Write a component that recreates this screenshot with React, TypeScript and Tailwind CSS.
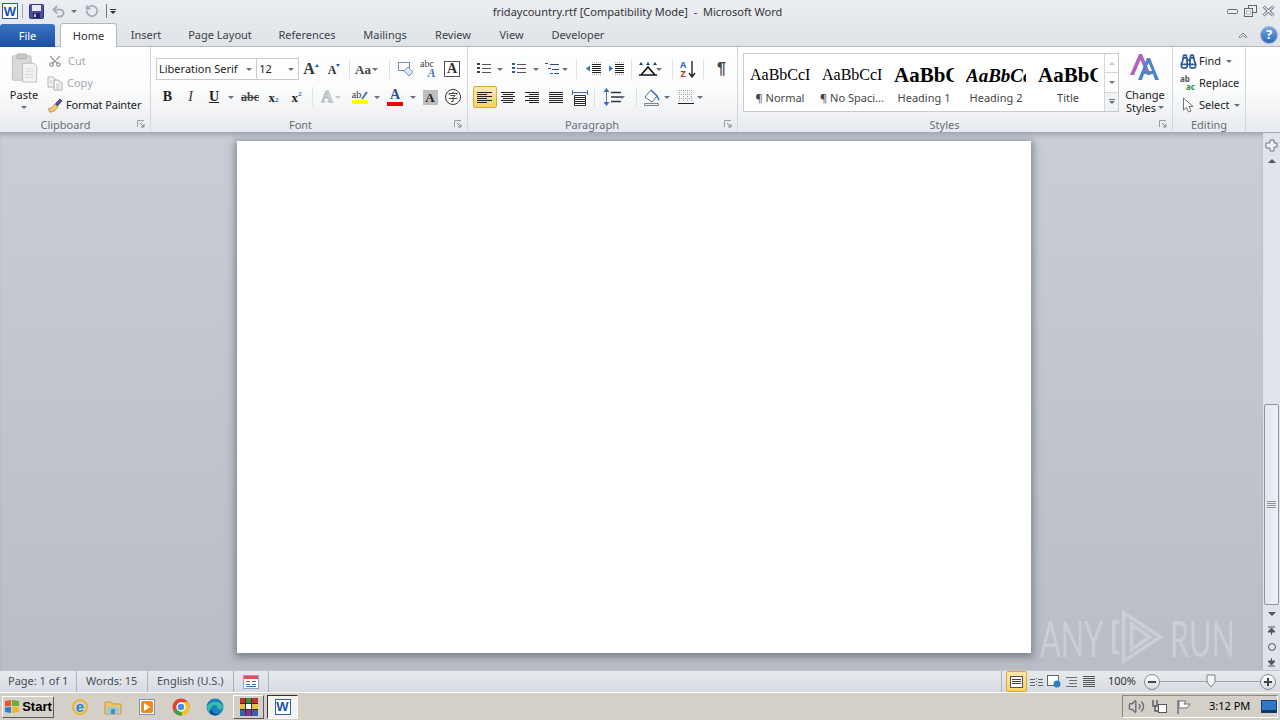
import type { ReactNode } from 'react'
import { Binoculars, Redo2, RotateCcw, Scissors, Undo2, Volume2 } from 'lucide-react'

const ui = "font-['Noto_Sans',sans-serif]"
const serif = "font-['Liberation_Serif',serif]"

const Caret = ({ className = '' }: { className?: string }) => (
  <span className={`inline-block w-0 h-0 border-x-[3px] border-t-[3px] border-x-transparent border-t-[#6a6f77] ${className}`} />
)

const Tool = ({ w, children, className = '' }: { w: string; children?: ReactNode; className?: string }) => (
  <div className={`${w} h-[22px] shrink-0 flex items-center justify-center ${className}`}>{children}</div>
)

const Sep = ({ className = '' }: { className?: string }) => (
  <div className={`w-px h-[20px] shrink-0 bg-[#dfe2e6] ${className}`} />
)

// little icon made only of horizontal lines
const Lines = ({ rows, color = '#222', w = 16, h = 16 }: { rows: number[][]; color?: string; w?: number; h?: number }) => (
  <svg width={w} height={h} viewBox={`0 0 ${w} ${h}`}>
    {rows.map(([a, b, y], i) => (
      <rect key={i} x={a} y={y} width={b - a} height={1} fill={color} />
    ))}
  </svg>
)

const Launcher = () => (
  <svg width="8" height="8" viewBox="0 0 8 8" className="shrink-0">
    <path d="M0.5 7V0.5H7" fill="none" stroke="#9aa0a8" />
    <path d="M3 3L7 7M7 4V7H4" fill="none" stroke="#7d8793" />
  </svg>
)

const Group = ({ w, label, children, launcher = true, pad = 'pr-[5px]', labelPad = 'pr-[8px]' }: { w: string; label: string; children: ReactNode; launcher?: boolean; pad?: string; labelPad?: string }) => (
  <div className={`${w} h-[85px] shrink-0 flex flex-col border-r border-[#d3d6da]`}>
    <div className="h-[70px]">{children}</div>
    <div className={`h-[14px] flex items-center ${pad}`}>
      <span className={`flex-1 text-center text-[11px] leading-none text-[#6a6f77] ${labelPad}`}>{label}</span>
      {launcher && <Launcher />}
    </div>
  </div>
)

const WordIcon = () => (
  <div className="w-[16px] h-[16px] border border-[#2d5ea8] bg-white flex items-center justify-center text-[#1c54a8] font-bold text-[13px] leading-none font-['Liberation_Sans',sans-serif]">
    W
  </div>
)

const SaveIcon = () => (
  <svg width="15" height="15" viewBox="0 0 15 15">
    <rect x="0.5" y="0.5" width="14" height="14" rx="1" fill="#4a4fa8" stroke="#33367e" />
    <rect x="3" y="1" width="9" height="6" fill="#e6e9f4" />
    <rect x="4" y="9" width="7" height="5" fill="#22245c" />
    <rect x="5" y="10" width="2" height="3" fill="#b8bbd8" />
  </svg>
)

const WinControls = () => (
  <div className="flex items-center gap-[5px] pr-[5px]">
    <svg width="12" height="10" viewBox="0 0 12 10">
      <rect x="0.5" y="3.5" width="10" height="4" rx="1" fill="#eef1f4" stroke="#5f6670" />
    </svg>
    <svg width="13" height="12" viewBox="0 0 13 12">
      <rect x="4.5" y="0.5" width="8" height="7" fill="#eef1f4" stroke="#5f6670" />
      <rect x="0.5" y="3.5" width="8" height="8" fill="#eef1f4" stroke="#5f6670" />
      <rect x="2.5" y="6" width="4" height="3" fill="#fff" stroke="#8b929b" strokeWidth="0.6" />
    </svg>
    <svg width="13" height="12" viewBox="0 0 13 12">
      <path d="M1.5 1.5L11.5 10.5M11.5 1.5L1.5 10.5" stroke="#5f6670" strokeWidth="3" />
      <path d="M1.5 1.5L11.5 10.5M11.5 1.5L1.5 10.5" stroke="#eef1f4" strokeWidth="1.2" />
    </svg>
  </div>
)

const TitleBar = () => (
  <div className="h-[22px] flex items-center pl-[2px]">
    <WordIcon />
    <div className="w-px h-[14px] bg-[#9ea4ac] ml-[4px] mr-[6px]" />
    <SaveIcon />
    <Undo2 size={15} strokeWidth={3} color="#a3acb9" className="ml-[7px]" />
    <Caret className="ml-[5px]" />
    <RotateCcw size={14} strokeWidth={3} color="#a3acb9" className="ml-[8px]" />
    <div className="w-px h-[14px] bg-[#777] ml-[7px] mr-[3px]" />
    <div className="flex flex-col items-center gap-px">
      <div className="w-[6px] h-px bg-[#333]" />
      <Caret className="!border-t-[#333]" />
    </div>
    <div className="flex-1 text-center text-[11px] leading-none text-[#333] pr-[68px]">
      fridaycountry.rtf [Compatibility Mode]&nbsp; - &nbsp;Microsoft Word
    </div>
    <WinControls />
  </div>
)

const tabs: [string, string][] = [
  ['Insert', 'w-[58px]'],
  ['Page Layout', 'w-[90px]'],
  ['References', 'w-[84px]'],
  ['Mailings', 'w-[72px]'],
  ['Review', 'w-[64px]'],
  ['View', 'w-[53px]'],
  ['Developer', 'w-[80px]'],
]

const TabRow = () => (
  <div className="h-[25px] flex items-end text-[11px] border-b border-[#b4b8bd]">
    <div className="w-[55px] h-[23px] pt-px rounded-t-[3px] bg-gradient-to-b from-[#3b74c2] to-[#1c4e9e] text-white flex items-center justify-center -mb-px">File</div>
    <div className="w-[57px] h-[24px] pt-px ml-[5px] rounded-t-[3px] bg-white border border-b-0 border-[#b4b8bd] text-[#333] flex items-center justify-center -mb-px">Home</div>
    {tabs.map(([t, w]) => (
      <div key={t} className={`${w} h-[23px] pt-[2px] flex items-center justify-center text-[#3d4248]`}>{t}</div>
    ))}
    <div className="flex-1 h-[23px] flex items-center justify-end pr-[2px] gap-[12px]">
      <svg width="10" height="8" viewBox="0 0 10 8">
        <path d="M1 6L5 2L9 6L7.5 6.5L5 4.5L2.5 6.5Z" fill="#fff" stroke="#5f6670" strokeWidth="0.8" />
      </svg>
      <div className="w-[18px] h-[18px] rounded-full bg-gradient-to-b from-[#7aa9e0] to-[#2a66b8] border border-[#9ab8dc] text-white text-[13px] font-bold leading-none flex items-center justify-center">?</div>
    </div>
  </div>
)

const PasteIcon = () => (
  <svg width="27" height="30" viewBox="0 0 28 32">
    <rect x="1" y="3" width="20" height="26" rx="1" fill="#d9d9d9" stroke="#bdbdbd" />
    <rect x="6" y="1" width="10" height="5" rx="1" fill="#c9c9c9" stroke="#aeaeae" />
    <path d="M12 11H24L27 14V31H12Z" fill="#f3f3f3" stroke="#bdbdbd" />
    <path d="M15 17H24M15 20H24M15 23H24M15 26H24" stroke="#d4d4d4" />
  </svg>
)

const CopyIcon = () => (
  <svg width="16" height="15" viewBox="0 0 16 15">
    <path d="M1 1H6L9 4V11H1Z" fill="#f2f2f2" stroke="#b5b5b5" />
    <path d="M7 4H11L15 7V14H7Z" fill="#f8f8f8" stroke="#a8a8a8" />
    <path d="M9 8H13M9 10H13M9 12H13M3 5H5M3 7H5" stroke="#c2c2c2" />
  </svg>
)

const BrushIcon = () => (
  <svg width="16" height="15" viewBox="0 0 16 15">
    <path d="M1 11C4 11 6 8 8 6L11 9C9 12 6 14.5 2 14C3 13 2 12 1 11Z" fill="#efc872" stroke="#a07c30" strokeWidth="0.7" />
    <path d="M8.5 5.5L13 1L15 3L10.5 8Z" fill="#5a4f9c" stroke="#3c3372" strokeWidth="0.7" />
  </svg>
)

const Clipboard = () => (
  <Group w="w-[151px]" label="Clipboard" pad="pl-[2px] pr-[5px]">
    <div className="flex pl-[6px] h-full">
      <div className="w-[36px] flex flex-col items-center pt-[6px]">
        <PasteIcon />
        <span className="text-[11px] leading-none text-[#222] mt-[6px]">Paste</span>
        <Caret className="mt-[6px]" />
      </div>
      <div className="flex flex-col ml-[5px] pt-[3px] text-[11px] text-[#a4a8ad]">
        <div className="h-[22px] flex items-center gap-[4px]">
          <Scissors size={14} color="#8a8f96" className="ml-[1px] -rotate-90" />
          <span className="ml-[2px]">Cut</span>
        </div>
        <div className="h-[22px] flex items-center gap-[4px]">
          <CopyIcon />
          <span>Copy</span>
        </div>
        <div className="h-[22px] flex items-center gap-[3px] text-[#222] whitespace-nowrap">
          <BrushIcon />
          <span className="tracking-[-0.15px]">Format Painter</span>
        </div>
      </div>
    </div>
  </Group>
)

const Serif = ({ children, className = '' }: { children: ReactNode; className?: string }) => (
  <span className={`${serif} leading-none ${className}`}>{children}</span>
)

const Combo = ({ w, text }: { w: string; text: string }) => (
  <div className={`${w} h-[22px] border border-[#c7cbd1] bg-white flex items-center pl-[2px] pr-[4px] text-[11px] text-[#222] -mr-px`}>
    <span className="flex-1 truncate">{text}</span>
    <Caret />
  </div>
)

const Font = () => (
  <Group w="w-[317px]" label="Font" labelPad="pr-[4px]">
    <div className="pl-[5px] pt-[11px] flex flex-col gap-[6px]">
      <div className="flex items-center">
        <Combo w="w-[102px]" text="Liberation Serif" />
        <Combo w="w-[43px]" text="12" />
        <Tool w="w-[24px]" className="ml-[1px]">
          <Serif className="text-[16px] font-bold text-[#333]">A</Serif>
          <Caret className="-mt-[8px] rotate-180 !border-t-[#2a5ea8] !border-x-[2px]" />
        </Tool>
        <Tool w="w-[22px]">
          <Serif className="text-[12px] font-bold text-[#333] mt-[2px]">A</Serif>
          <Caret className="-mt-[8px] !border-t-[#2a5ea8] !border-x-[2px]" />
        </Tool>
        <Sep className="ml-[4px]" />
        <Tool w="w-[33px]" className="gap-[1px]">
          <Serif className="text-[13px] font-bold text-[#444]">Aa</Serif>
          <Caret />
        </Tool>
        <Sep className="ml-[6px]" />
        <Tool w="w-[31px]">
          <svg width="17" height="16" viewBox="0 0 17 16">
            <rect x="1.5" y="1.5" width="11" height="8" fill="#fff" stroke="#7a8ea8" />
            <path d="M7 10L11 6L16 11L12 15Z" fill="#dce6f4" stroke="#7796bd" />
          </svg>
        </Tool>
        <Tool w="w-[16px]" className="flex-col">
          <Serif className="text-[10px] text-[#444] -mb-[2px] -ml-[4px]">abc</Serif>
          <Serif className="text-[12px] italic font-bold text-[#3b78c2] ml-[5px]">A</Serif>
        </Tool>
        <Tool w="w-[30px]">
          <div className="w-[16px] h-[16px] border border-[#555] bg-white flex items-center justify-center">
            <Serif className="text-[14px] font-bold text-[#333]">A</Serif>
          </div>
        </Tool>
      </div>
      <div className="flex items-center">
        <Tool w="w-[23px]"><Serif className="text-[14px] font-bold text-[#222]">B</Serif></Tool>
        <Tool w="w-[23px]"><Serif className="text-[14px] italic text-[#333]">I</Serif></Tool>
        <Tool w="w-[24px]"><Serif className="text-[14px] font-bold underline text-[#222]">U</Serif></Tool>
        <Tool w="w-[10px]"><Caret /></Tool>
        <Tool w="w-[24px]" className="ml-[2px]"><Serif className="text-[12px] font-bold line-through text-[#444]">abc</Serif></Tool>
        <Tool w="w-[23px]">
          <Serif className="text-[13px] font-bold text-[#222]">x</Serif>
          <Serif className="text-[7px] font-bold text-[#2a5ea8] mt-[6px]">2</Serif>
        </Tool>
        <Tool w="w-[23px]">
          <Serif className="text-[13px] font-bold text-[#222]">x</Serif>
          <Serif className="text-[7px] font-bold text-[#2a5ea8] -mt-[6px]">2</Serif>
        </Tool>
        <Sep className="ml-[4px]" />
        <Tool w="w-[28px]" className="ml-[4px] gap-[2px]">
          <Serif className="text-[16px] font-bold text-[#d9dbde] [-webkit-text-stroke:1px_#b7babf]">A</Serif>
          <Caret className="!border-t-[#c3c6ca]" />
        </Tool>
        <Tool w="w-[24px]" className="flex-col ml-[3px]">
          <div className="flex items-center">
            <Serif className="text-[10px] text-[#333]">ab</Serif>
            <svg width="7" height="9" viewBox="0 0 7 9">
              <path d="M1 8L6 1" stroke="#4a76b0" strokeWidth="2" />
            </svg>
          </div>
          <div className="w-[16px] h-[4px] bg-[#ffff00]" />
        </Tool>
        <Tool w="w-[10px]"><Caret /></Tool>
        <Tool w="w-[26px]" className="flex-col">
          <Serif className="text-[14px] font-bold text-[#2a4f96]">A</Serif>
          <div className="w-[16px] h-[4px] bg-[#f00000]" />
        </Tool>
        <Tool w="w-[10px]"><Caret /></Tool>
        <Tool w="w-[24px]">
          <div className="w-[15px] h-[15px] bg-[#bdbdbd] flex items-center justify-center">
            <Serif className="text-[13px] font-bold text-[#222]">A</Serif>
          </div>
        </Tool>
        <Tool w="w-[22px]">
          <div className="w-[16px] h-[16px] rounded-full border border-[#333] bg-white flex items-center justify-center text-[10px] leading-none text-[#222] font-['Noto_Sans_CJK_SC',sans-serif]">字</div>
        </Tool>
      </div>
    </div>
  </Group>
)

const bullets = [[6, 15, 3], [6, 15, 7], [6, 15, 11]]

const BulletIcon = ({ dot }: { dot: string }) => (
  <div className="relative">
    <Lines rows={bullets} color="#555" />
    <div className="absolute left-[1px] top-[2px] flex flex-col gap-[2px]">
      <div className={`w-[3px] h-[2px] ${dot}`} />
      <div className={`w-[3px] h-[2px] ${dot}`} />
      <div className={`w-[3px] h-[2px] ${dot}`} />
    </div>
  </div>
)

const Align = ({ rows }: { rows: number[][] }) => <Lines rows={rows} color="#222" />

const IndentIcon = ({ arrow }: { arrow: string }) => (
  <svg width="17" height="16" viewBox="0 0 17 16">
    <path d="M7 3.5H16M7 5.5H16M7 7.5H16M7 9.5H16M7 11.5H16" stroke="#222" />
    <path d={arrow} fill="#2e6fc0" />
    <path d="M7 13.5H16M7 1.5H16" stroke="#aaa" strokeDasharray="1 1" />
  </svg>
)

const Paragraph = () => (
  <Group w="w-[270px]" label="Paragraph">
    <div className="pt-[11px] pl-[5px] flex flex-col gap-[6px]">
      <div className="flex items-center">
        <Tool w="w-[22px]"><BulletIcon dot="bg-[#3a3f46]" /></Tool>
        <Tool w="w-[10px]"><Caret /></Tool>
        <Tool w="w-[24px]" className="ml-[2px]"><BulletIcon dot="bg-[#2a5ea8]" /></Tool>
        <Tool w="w-[9px]"><Caret /></Tool>
        <Tool w="w-[22px]" className="ml-[1px]">
          <Lines rows={[[1, 4, 2], [6, 15, 3], [4, 7, 7], [8, 15, 8], [6, 9, 12], [10, 15, 12]]} color="#2f4f7f" />
        </Tool>
        <Tool w="w-[9px]" className="-ml-[3px]"><Caret /></Tool>
        <Sep className="ml-[7px]" />
        <Tool w="w-[24px]" className="ml-[4px]"><IndentIcon arrow="M1 7.5L5 4.5V10.5Z" /></Tool>
        <Tool w="w-[23px]"><IndentIcon arrow="M5 7.5L1 4.5V10.5Z" /></Tool>
        <Sep className="ml-[3px]" />
        <Tool w="w-[24px]" className="ml-[4px]">
          <svg width="18" height="16" viewBox="0 0 18 16">
            <path d="M2 14L9 6L16 14M0 14H18" fill="none" stroke="#111" strokeWidth="1.6" />
            <path d="M2 1L4 4H0ZM16 1L18 4H14ZM9 1L11 4H7Z" fill="#1a3f7a" />
          </svg>
        </Tool>
        <Tool w="w-[8px]" className="-ml-[5px]"><Caret /></Tool>
        <Sep className="ml-[9px]" />
        <Tool w="w-[30px]">
          <div className="flex flex-col items-center">
            <span className="text-[9px] leading-[9px] font-bold text-[#3a6db4]">A</span>
            <span className="text-[9px] leading-[9px] font-bold text-[#a23a2c]">Z</span>
          </div>
          <svg width="8" height="18" viewBox="0 0 8 18" className="ml-[2px]">
            <path d="M4 1V16M1 13L4 17L7 13" fill="none" stroke="#222" strokeWidth="1.4" />
          </svg>
        </Tool>
        <Sep />
        <Tool w="w-[35px]"><span className="text-[16px] leading-none font-bold text-[#444] font-['Liberation_Sans',sans-serif]">¶</span></Tool>
      </div>
      <div className="flex items-center">
        <Tool w="w-[24px]" className="border border-[#d9a93f] rounded-[2px] bg-gradient-to-b from-[#fde9a8] to-[#fbd168]">
          <Align rows={[[0, 15, 3], [0, 10, 5], [0, 15, 7], [0, 10, 9], [0, 15, 11], [0, 10, 13]]} />
        </Tool>
        <Tool w="w-[24px]"><Align rows={[[0, 14, 3], [2, 12, 5], [0, 14, 7], [2, 12, 9], [0, 14, 11], [2, 12, 13]]} /></Tool>
        <Tool w="w-[24px]"><Align rows={[[0, 14, 3], [4, 14, 5], [0, 14, 7], [4, 14, 9], [0, 14, 11], [4, 14, 13]]} /></Tool>
        <Tool w="w-[24px]"><Align rows={[[0, 14, 3], [0, 14, 5], [0, 14, 7], [0, 14, 9], [0, 14, 11], [0, 14, 13]]} /></Tool>
        <Tool w="w-[22px]">
          <svg width="16" height="17" viewBox="0 0 16 17">
            <path d="M1 3.5H15M0.5 1V6M15.5 1V6" stroke="#3a6db4" />
            <path d="M2.5 6.5H13.5V16.5H2.5Z" fill="#fff" stroke="#333" />
            <path d="M3 8.5H13M3 10.5H13M3 12.5H13M3 14.5H13" stroke="#222" />
          </svg>
        </Tool>
        <Sep className="ml-[3px]" />
        <Tool w="w-[18px]" className="ml-[8px]">
          <svg width="18" height="18" viewBox="0 0 18 18">
            <path d="M3.5 3V15" stroke="#6b7785" />
            <path d="M3.5 0L6.5 4H0.5ZM3.5 18L0.5 14H6.5Z" fill="#2e6fc0" />
            <path d="M8 4.5H18M8 9H18M8 13.5H18" stroke="#333" strokeWidth="1.4" />
          </svg>
        </Tool>
        <Tool w="w-[8px]" className="-ml-[3px]"><Caret /></Tool>
        <Sep className="ml-[10px]" />
        <Tool w="w-[26px]" className="ml-[2px]">
          <svg width="18" height="18" viewBox="0 0 18 18">
            <path d="M2 9L8 2L14 8L9 14Z" fill="#fff" stroke="#5a6a80" />
            <path d="M8 2L14 8L16 12" fill="none" stroke="#3a6db4" strokeWidth="1.5" />
            <path d="M1.5 15.5H15.5V17.5H1.5Z" fill="#eef1f4" stroke="#7d8793" />
          </svg>
        </Tool>
        <Tool w="w-[8px]" className="-ml-[2px]"><Caret /></Tool>
        <Tool w="w-[24px]" className="ml-[3px]">
          <svg width="16" height="16" viewBox="0 0 16 16">
            <path d="M1 1.5H15M1 5.5H15M1 9.5H15M1.5 1V13M5.5 1V13M9.5 1V13M13.5 1V13" stroke="#9ea3aa" strokeDasharray="1 1" />
            <path d="M0 14.5H16" stroke="#222" />
          </svg>
        </Tool>
        <Tool w="w-[8px]" className="-ml-[2px]"><Caret /></Tool>
      </div>
    </div>
  </Group>
)

const gallery: [string, string, string][] = [
  ['AaBbCcI', '¶ Normal', 'text-[16px] font-normal'],
  ['AaBbCcI', '¶ No Spaci...', 'text-[16px] font-normal'],
  ['AaBbC', 'Heading 1', 'text-[21px] font-bold'],
  ['AaBbCc', 'Heading 2', 'text-[19px] font-bold italic'],
  ['AaBbC', 'Title', 'text-[21px] font-bold'],
]

const ChangeStylesIcon = () => (
  <svg width="32" height="28" viewBox="0 0 32 28">
    <path d="M1 22L10 1H13L22 22H18L11.5 7L5 22Z" fill="#b565b8" />
    <path d="M9 27L18 5H21L30 27H26L24 21H15L13 27ZM16 18H23L19.5 10Z" fill="#4d85c9" />
  </svg>
)

const Styles = () => (
  <Group w="w-[435px]" label="Styles">
    <div className="flex pt-[6px] pl-[5px] h-full">
      <div className="w-[376px] h-[59px] border border-[#c7cbd1] bg-white flex">
        <div className="flex-1 flex pt-[4px]">
          {gallery.map(([sample, name, cls], i) => (
            <div key={i} className="w-[72px] flex flex-col items-center shrink-0">
              <div className={`h-[34px] w-[60px] flex items-center overflow-hidden whitespace-nowrap text-black ${serif} ${cls}`}>
                <span className="leading-none">{sample}</span>
              </div>
              <span className="text-[11px] leading-none text-[#444] whitespace-nowrap">{name}</span>
            </div>
          ))}
        </div>
        <div className="w-[14px] border-l border-[#d3d6da] flex flex-col">
          <div className="flex-1 border-b border-[#d3d6da] flex items-center justify-center"><Caret className="rotate-180 !border-t-[#c3c6ca]" /></div>
          <div className="flex-1 border-b border-[#d3d6da] flex items-center justify-center"><Caret /></div>
          <div className="flex-1 flex flex-col items-center justify-center gap-px bg-[#f1f3f5]">
            <div className="w-[6px] h-px bg-[#6a6f77]" />
            <Caret />
          </div>
        </div>
      </div>
      <div className="w-[52px] flex flex-col items-center text-[11px] leading-[13px] text-[#222]">
        <ChangeStylesIcon />
        <span className="mt-[7px]">Change</span>
        <span className="flex items-center gap-[2px]">Styles <Caret /></span>
      </div>
    </div>
  </Group>
)

const Editing = () => (
  <Group w="w-[73px]" label="Editing" launcher={false} pad="pl-0" labelPad="">
    <div className="flex flex-col pl-[7px] pt-[3px] text-[11px] text-[#222]">
      <div className="h-[22px] flex items-center gap-[2px]">
        <Binoculars size={17} color="#2c5a9a" strokeWidth={2.4} />
        <span>Find</span>
        <Caret className="ml-[3px]" />
      </div>
      <div className="h-[22px] flex items-center gap-[2px]">
        <div className="w-[17px] flex flex-col text-[8px] font-bold">
          <span className="leading-[8px] text-[#555]">ab</span>
          <span className="leading-[8px] text-[#2d8a3a] ml-[6px]">ac</span>
        </div>
        <span>Replace</span>
      </div>
      <div className="h-[22px] flex items-center gap-[3px]">
        <svg width="16" height="16" viewBox="0 0 16 16" className="shrink-0">
          <path d="M3.5 1V13L6.5 10.5L8.5 15L11 14L9 9.5H13Z" fill="#fff" stroke="#6a6f77" />
        </svg>
        <span>Select</span>
        <Caret className="ml-[1px]" />
      </div>
    </div>
  </Group>
)

const ScrollBtn = ({ children, className = '' }: { children?: ReactNode; className?: string }) => (
  <div className={`w-[17px] flex items-center justify-center shrink-0 ${className}`}>{children}</div>
)

const Scrollbar = () => (
  <div className="w-[17px] shrink-0 bg-[#dfe3ea] flex flex-col">
    <ScrollBtn className="h-[20px] pt-[4px]">
      <svg width="13" height="13" viewBox="0 0 13 13">
        <path d="M1 4H5V1H9V4H12V8H9V12H5V9H1Z" fill="#eef1f4" stroke="#6f757d" />
      </svg>
    </ScrollBtn>
    <ScrollBtn className="h-[16px]"><Caret className="rotate-180 !border-x-[4px] !border-t-[4px] !border-t-[#4f555d]" /></ScrollBtn>
    <div className="h-[235px]" />
    <div className="w-[15px] h-[201px] ml-px rounded-[2px] border border-[#8f959f] bg-gradient-to-r from-[#e4e7ee] to-[#eceff5] flex flex-col items-center justify-center gap-px">
      <div className="w-[9px] h-px bg-[#8f959f]" />
      <div className="w-[9px] h-px bg-[#8f959f]" />
      <div className="w-[9px] h-px bg-[#8f959f]" />
      <div className="w-[9px] h-px bg-[#8f959f]" />
    </div>
    <div className="flex-1" />
    <ScrollBtn className="h-[16px]"><Caret className="!border-x-[4px] !border-t-[4px] !border-t-[#4f555d]" /></ScrollBtn>
    <ScrollBtn className="h-[17px]">
      <svg width="9" height="9" viewBox="0 0 9 9"><path d="M1 1H8M4.5 2L1 6H8ZM4.5 6V9" stroke="#4f555d" fill="#4f555d" /></svg>
    </ScrollBtn>
    <ScrollBtn className="h-[15px]"><div className="w-[8px] h-[8px] rounded-full border border-[#4f555d]" /></ScrollBtn>
    <ScrollBtn className="h-[16px]">
      <svg width="9" height="9" viewBox="0 0 9 9"><path d="M1 8H8M4.5 7L1 3H8ZM4.5 3V0" stroke="#4f555d" fill="#4f555d" /></svg>
    </ScrollBtn>
  </div>
)

const Watermark = () => (
  <div className="absolute left-[1040px] top-[477px] flex items-center text-white/25 font-['Lato',sans-serif] font-normal text-[51px] leading-none pointer-events-none">
    <span className="w-[72px] origin-left scale-x-[0.6] whitespace-nowrap">ANY</span>
    <svg width="52" height="54" viewBox="0 0 58 60" fill="none" stroke="currentColor" strokeWidth="4">
      <path d="M8 13H2V47H8" />
      <path d="M13 3L54 30L13 57Z" />
      <path d="M22 16L42 30L22 44Z" />
    </svg>
    <span className="w-[64px] ml-[6px] origin-left scale-x-[0.6] whitespace-nowrap">RUN</span>
  </div>
)

const StatusBar = () => (
  <div className="h-[22px] bg-gradient-to-b from-[#e6e9ee] to-[#d8dce2] border-t border-[#c2c6cc] flex items-center text-[11px] text-[#4a4f56]">
    <div className="w-[77px] pl-[8px] border-r border-[#aeb3ba] h-full flex items-center">Page: 1 of 1</div>
    <div className="w-[71px] pl-[9px] border-r border-[#aeb3ba] h-full flex items-center">Words: 15</div>
    <div className="w-[86px] pl-[9px] border-r border-[#aeb3ba] h-full flex items-center whitespace-nowrap">English (U.S.)</div>
    <div className="w-[35px] border-r border-[#aeb3ba] h-full flex items-center justify-center">
      <svg width="16" height="14" viewBox="0 0 16 14">
        <rect x="0.5" y="0.5" width="15" height="13" fill="#fff" stroke="#8ea6c4" />
        <rect x="1" y="1" width="14" height="3" fill="#d9534f" />
        <path d="M3 6.5H7M9 6.5H13M3 9.5H7M9 9.5H13M3 11.5H13" stroke="#3a6db4" />
      </svg>
    </div>
    <div className="flex-1" />
    <div className="w-px h-full bg-[#aeb3ba] mr-[3px]" />
    <div className="w-[21px] h-[21px] ml-px rounded-[2px] border border-[#d9a93f] bg-gradient-to-b from-[#fde9a8] to-[#fbd168] flex items-center justify-center">
      <div className="w-[13px] h-[12px] border border-[#555] bg-white flex flex-col justify-center gap-px px-px">
        <div className="h-px bg-[#444]" />
        <div className="h-px bg-[#444]" />
        <div className="h-px bg-[#444]" />
      </div>
    </div>
    <div className="w-[18px] flex justify-center"><Lines rows={[[1, 6, 3], [9, 14, 3], [1, 6, 6], [9, 14, 6], [1, 6, 9], [9, 14, 9], [7, 8, 2], [7, 8, 5], [7, 8, 8]]} color="#5f6670" w={15} h={12} /></div>
    <div className="w-[17px] flex justify-center">
      <svg width="14" height="13" viewBox="0 0 14 13">
        <rect x="0.5" y="0.5" width="11" height="10" fill="#fff" stroke="#5f6670" />
        <circle cx="10" cy="9" r="3.5" fill="#2e7dbf" />
      </svg>
    </div>
    <div className="w-[18px] flex justify-center"><Lines rows={[[1, 12, 2], [4, 12, 5], [4, 12, 8], [1, 12, 11]]} color="#6d737b" w={13} h={13} /></div>
    <div className="w-[18px] flex justify-center"><Lines rows={[[1, 13, 1], [1, 13, 3], [1, 13, 5], [1, 13, 7], [1, 13, 9], [1, 13, 11]]} color="#555" w={14} h={13} /></div>
    <div className="w-[46px] text-center pl-[2px] text-[#333]">100%</div>
    <div className="w-[16px] h-[16px] rounded-full border border-[#868c94] bg-gradient-to-b from-white to-[#d5d9df] flex items-center justify-center">
      <div className="w-[8px] h-[2px] bg-[#444]" />
    </div>
    <div className="w-[100px] h-px bg-[#9ea3aa] relative">
      <svg width="10" height="14" viewBox="0 0 10 14" className="absolute left-[46px] -top-[7px]">
        <path d="M1 1H9V8L5 13L1 8Z" fill="#f4f5f7" stroke="#7d838b" />
      </svg>
    </div>
    <div className="w-[16px] h-[16px] mr-[4px] rounded-full border border-[#868c94] bg-gradient-to-b from-white to-[#d5d9df] flex items-center justify-center relative">
      <div className="w-[8px] h-[2px] bg-[#444]" />
      <div className="w-[2px] h-[8px] bg-[#444] absolute" />
    </div>
  </div>
)

const raised = 'border border-t-white border-l-white border-r-[#5a5a5a] border-b-[#5a5a5a]'

const Taskbar = () => (
  <div className="h-[28px] bg-[#d4d0c8] border-t border-white flex items-center">
    <div className={`w-[52px] h-[22px] ml-[2px] ${raised} flex items-center justify-center gap-[2px] text-[13px] font-bold text-black font-['Liberation_Sans',sans-serif]`}>
      <svg width="16" height="15" viewBox="0 0 16 15">
        <path d="M1 2L7 1V7L1 7.5Z" fill="#e0582c" />
        <path d="M8 1L15 2V7L8 7Z" fill="#6cab2e" />
        <path d="M1 8.5L7 8V14L1 13Z" fill="#2e7dd0" />
        <path d="M8 8L15 8V13L8 14Z" fill="#f2b81f" />
      </svg>
      Start
    </div>
    <div className="ml-[17px] flex items-center">
      <div className="w-[18px] flex justify-center">
        <div className="w-[16px] h-[16px] rounded-full border-2 border-[#e8b73a] flex items-center justify-center text-[15px] font-bold leading-none text-[#2e86d0] font-['Liberation_Sans',sans-serif]">e</div>
      </div>
      <svg width="18" height="16" viewBox="0 0 18 16" className="ml-[15px]">
        <path d="M1 3H7L9 5H17V15H1Z" fill="#eec96a" stroke="#c49a3c" />
        <rect x="3" y="8" width="12" height="7" fill="#9dc8e4" />
        <rect x="7" y="10" width="4" height="5" fill="#4b8fbd" />
      </svg>
      <div className="w-[16px] h-[16px] ml-[17px] border border-[#6d9ac4] bg-white flex items-center justify-center">
        <div className="w-[12px] h-[12px] rounded-[2px] bg-[#ef8a1e] flex items-center justify-center">
          <div className="w-0 h-0 border-y-[4px] border-l-[6px] border-y-transparent border-l-white" />
        </div>
      </div>
      <svg width="18" height="18" viewBox="0 0 18 18" className="ml-[17px]">
        <circle cx="9" cy="9" r="8.5" fill="#e0453a" />
        <path d="M9 9L1.5 13A8.5 8.5 0 0 0 10 17.5Z" fill="#3da53f" />
        <path d="M9 9L10 17.5A8.5 8.5 0 0 0 17.5 9 8.5 8.5 0 0 0 15.5 4H9Z" fill="#f4c31d" />
        <circle cx="9" cy="9" r="4" fill="#4a8ee8" stroke="#fff" strokeWidth="1.4" />
      </svg>
      <svg width="18" height="18" viewBox="0 0 18 18" className="ml-[16px]">
        <circle cx="9" cy="9" r="8.5" fill="#1b7fc4" />
        <path d="M1 9C3 3 15 2 17 9C17 12 12 12 11 10C13 7 6 5 5 10C5 14 10 17 14 15.5C11 18.5 2 18 1 9Z" fill="#35c0a4" />
        <path d="M5 10C5 14 10 17 14 15.5C11 18.5 6 18 3.5 15C3.5 13 4 11 5 10Z" fill="#0c4e8e" />
      </svg>
      <div className={`w-[31px] h-[24px] ml-[9px] ${raised} flex items-center justify-center`}>
        <div className="w-[18px] h-[18px] grid grid-cols-3 gap-px bg-[#333]">
          <div className="bg-[#c62f2f]" /><div className="bg-[#3f8f3a]" /><div className="bg-[#c62f2f]" />
          <div className="bg-[#e8c23a]" /><div className="bg-white" /><div className="bg-[#e8c23a]" />
          <div className="bg-[#3a5db0]" /><div className="bg-[#8a2f8f]" /><div className="bg-[#3a5db0]" />
        </div>
      </div>
      <div className="w-[31px] h-[24px] ml-[3px] border border-t-[#333] border-l-[#333] border-r-white border-b-white bg-[#f4f3ef] flex items-center justify-center">
        <WordIcon />
      </div>
    </div>
    <div className="flex-1" />
    <div className="w-[156px] h-[23px] mr-[2px] border border-t-[#8a8780] border-l-[#8a8780] border-r-white border-b-white flex items-center text-black">
      <Volume2 size={17} color="#6a6f77" className="ml-[5px]" />
      <svg width="16" height="16" viewBox="0 0 16 16" className="ml-[7px]">
        <rect x="6.5" y="5.5" width="8" height="8" fill="#fff" stroke="#55595f" />
        <path d="M1 1V7H5V1M3 7V12H6" fill="none" stroke="#55595f" strokeWidth="1.4" />
      </svg>
      <svg width="16" height="16" viewBox="0 0 16 16" className="ml-[8px]">
        <path d="M2 1V15" stroke="#6a6f77" strokeWidth="1.4" />
        <path d="M3 2H10L8 5L14 5L11 9H3Z" fill="#fff" stroke="#6a6f77" />
      </svg>
      <span className="ml-[17px] w-[42px] whitespace-nowrap text-[11px]">3:12 PM</span>
      <svg width="16" height="14" viewBox="0 0 16 14" className="ml-[10px]">
        <rect x="0.5" y="0.5" width="15" height="12" fill="#2f78c8" stroke="#1a3f7a" />
        <rect x="1" y="10" width="14" height="2.5" fill="#14335e" />
      </svg>
    </div>
  </div>
)

const App = () => (
  <div className={`w-[1280px] h-[720px] overflow-hidden flex flex-col bg-[#e3e6ea] relative ${ui}`}>
    <div className="bg-gradient-to-b from-[#ebeef2] to-[#dfe3e7]">
      <TitleBar />
      <TabRow />
    </div>
    <div className="h-[86px] border-b border-[#a6abb2] flex bg-gradient-to-b from-white via-[#fbfcfc] to-[#e7eaee]">
      <Clipboard />
      <Font />
      <Paragraph />
      <Styles />
      <Editing />
    </div>
    <div className="flex-1 flex min-h-0 relative">
      <div className="flex-1 bg-gradient-to-b from-[#c9cdd6] to-[#b9bdc6] pt-[8px] pl-[237px] shadow-[inset_0_4px_4px_-2px_rgba(90,95,105,0.35)]">
        <div className="w-[794px] h-[512px] bg-white shadow-[0_2px_8px_2px_rgba(70,75,85,0.55)]" />
      </div>
      <Scrollbar />
      <Watermark />
    </div>
    <StatusBar />
    <Taskbar />
  </div>
)

export default App
